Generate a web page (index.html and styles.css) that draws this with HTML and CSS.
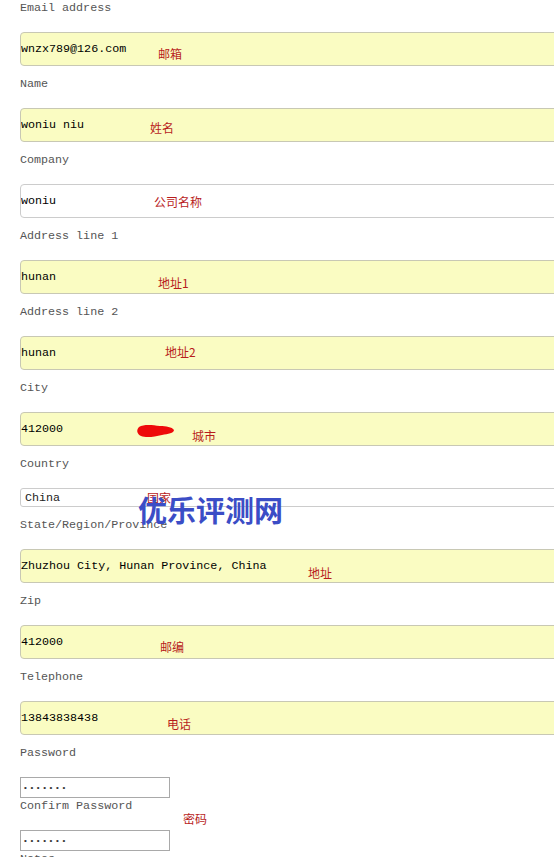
FILE: index.html
```html
<!DOCTYPE html>
<html lang="en">
<head>
    <meta charset="UTF-8">
    <meta name="viewport" content="width=device-width, initial-scale=1.0">
    <title>Account</title>
    <link rel="stylesheet" href="styles.css">
</head>
<body>
    <div class="form-box">
        <label class="field-label">Email address</label>
        <input type="text" class="field autofill" value="wnzx789@126.com">

        <label class="field-label">Name</label>
        <input type="text" class="field autofill" value="woniu niu">

        <label class="field-label">Company</label>
        <input type="text" class="field" value="woniu">

        <label class="field-label">Address line 1</label>
        <input type="text" class="field autofill" value="hunan">

        <label class="field-label">Address line 2</label>
        <input type="text" class="field autofill" value="hunan">

        <label class="field-label">City</label>
        <input type="text" class="field autofill" value="412000">

        <label class="field-label">Country</label>
        <select class="country">
            <option>China</option>
        </select>

        <label class="field-label">State/Region/Province</label>
        <input type="text" class="field autofill" value="Zhuzhou City, Hunan Province, China">

        <label class="field-label">Zip</label>
        <input type="text" class="field autofill" value="412000">

        <label class="field-label">Telephone</label>
        <input type="text" class="field autofill" value="13843838438">

        <label class="field-label">Password</label>
        <input type="password" class="pass" value="1234567">

        <label class="field-label">Confirm Password</label>
        <input type="password" class="pass" value="1234567">

        <label class="field-label">Notes</label>

        <!-- hand-written notes on top of the screenshot -->
        <span class="note" style="left:158px; top:48px;">邮箱</span>
        <span class="note" style="left:150px; top:122px;">姓名</span>
        <span class="note" style="left:154px; top:196px;">公司名称</span>
        <span class="note" style="left:158px; top:277px;">地址1</span>
        <span class="note" style="left:165px; top:346px;">地址2</span>
        <svg class="blot" width="40" height="16" viewBox="0 0 40 16">
            <path d="M3 4 C8 1 16 2 24 3 C30 3 36 4 38 7 C38 10 32 11 26 12 C18 14 10 15 5 13 C1 11 0 7 3 4 Z" fill="#ee0a0a"/>
        </svg>
        <span class="note" style="left:192px; top:430px;">城市</span>
        <span class="note" style="left:147px; top:492px;">国家</span>
        <span class="note" style="left:308px; top:567px;">地址</span>
        <span class="note" style="left:160px; top:641px;">邮编</span>
        <span class="note" style="left:167px; top:718px;">电话</span>
        <span class="note" style="left:183px; top:813px;">密码</span>
        <span class="watermark">优乐评测网</span>
    </div>
</body>
</html>
```

FILE: styles.css
```css
* {
    margin: 0;
    padding: 0;
    box-sizing: border-box;
}
body {
    background: #fff;
    overflow: hidden;
    height: 857px;
}
.form-box {
    position: relative;
    display: flex;
    flex-direction: column;
    align-items: flex-start;
    padding-left: 20px;
    font-family: "Liberation Mono", "Noto Sans CJK SC", monospace;
    font-size: 11.7px;
}
.field-label {
    display: block;
    height: 17px;
    line-height: 17px;
    margin-bottom: 15px;
    color: #555;
}
.field {
    width: 600px;
    height: 34px;
    margin-bottom: 10px;
    padding: 0 0 0 0;
    border: 1px solid #ccc;
    border-radius: 4px;
    background: #fff;
    color: #000;
    font-family: inherit;
    font-size: 11.7px;
    outline: none;
}
.autofill {
    background: #fafcc2;
    border-color: #c8c8b4;
}
.country {
    appearance: none;
    width: 600px;
    height: 19px;
    margin-bottom: 10px;
    padding-left: 4px;
    border: 1px solid #ccc;
    border-radius: 3px;
    background: #fff;
    color: #222;
    font-family: inherit;
    font-size: 11.7px;
}
.pass {
    width: 150px;
    height: 21px;
    padding-left: 2px;
    border: 1px solid #a9a9a9;
    border-radius: 0;
    background: #fff;
    color: #333;
    font-family: inherit;
    font-size: 8px;
    letter-spacing: 1.6px;
}
.note {
    position: absolute;
    font-family: "Noto Sans CJK SC", sans-serif;
    font-size: 12px;
    line-height: 12px;
    color: #b81c1c;
    white-space: nowrap;
}
.blot {
    position: absolute;
    left: 136px;
    top: 423px;
}
.watermark {
    position: absolute;
    left: 138px;
    top: 494px;
    font-family: "Noto Sans CJK SC", sans-serif;
    font-weight: bold;
    font-size: 29px;
    line-height: 31px;
    color: #3b4dc6;
    white-space: nowrap;
}
```
